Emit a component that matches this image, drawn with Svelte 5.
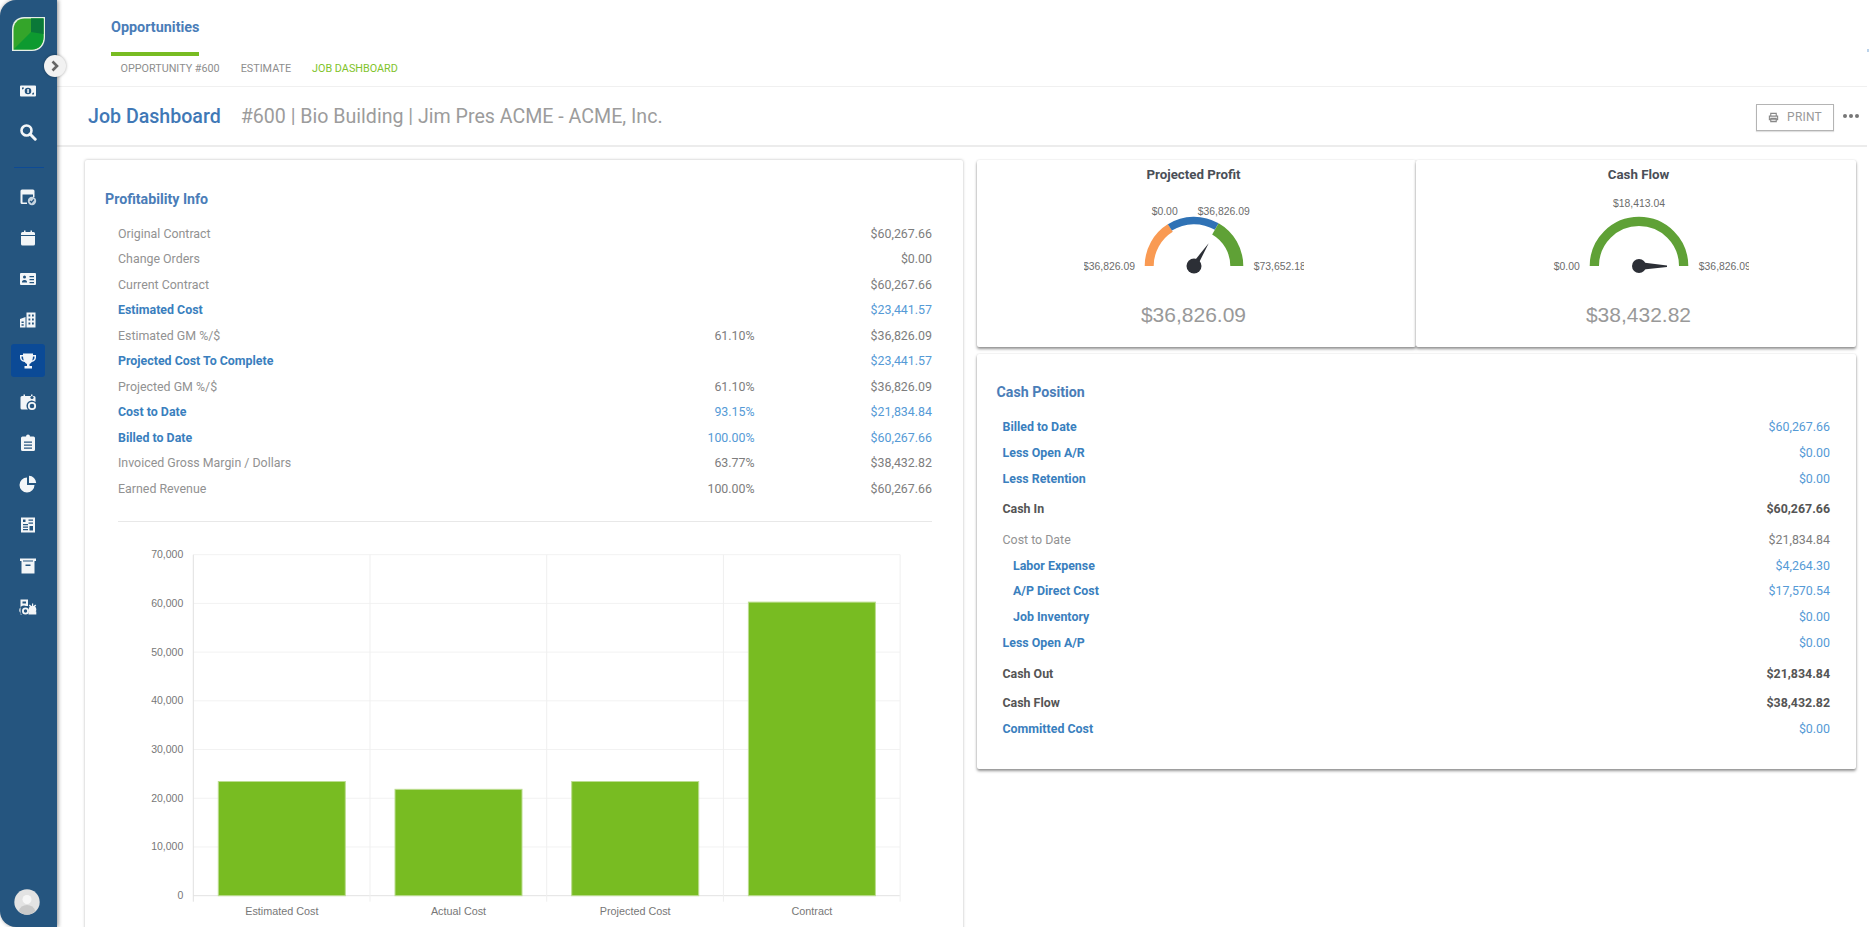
<script>
  const profit = [
    { l: 'Original Contract', a: '$60,267.66' },
    { l: 'Change Orders', a: '$0.00' },
    { l: 'Current Contract', a: '$60,267.66' },
    { l: 'Estimated Cost', a: '$23,441.57', link: true },
    { l: 'Estimated GM %/$', p: '61.10%', a: '$36,826.09' },
    { l: 'Projected Cost To Complete', a: '$23,441.57', link: true },
    { l: 'Projected GM %/$', p: '61.10%', a: '$36,826.09' },
    { l: 'Cost to Date', p: '93.15%', a: '$21,834.84', link: true },
    { l: 'Billed to Date', p: '100.00%', a: '$60,267.66', link: true },
    { l: 'Invoiced Gross Margin / Dollars', p: '63.77%', a: '$38,432.82' },
    { l: 'Earned Revenue', p: '100.00%', a: '$60,267.66' }
  ];
  const cash = [
    { l: 'Billed to Date', a: '$60,267.66', k: 'link' },
    { l: 'Less Open A/R', a: '$0.00', k: 'link' },
    { l: 'Less Retention', a: '$0.00', k: 'link' },
    { l: 'Cash In', a: '$60,267.66', k: 'strong gap' },
    { l: 'Cost to Date', a: '$21,834.84', k: 'plain gap' },
    { l: 'Labor Expense', a: '$4,264.30', k: 'link sub' },
    { l: 'A/P Direct Cost', a: '$17,570.54', k: 'link sub' },
    { l: 'Job Inventory', a: '$0.00', k: 'link sub' },
    { l: 'Less Open A/P', a: '$0.00', k: 'link' },
    { l: 'Cash Out', a: '$21,834.84', k: 'strong gap' },
    { l: 'Cash Flow', a: '$38,432.82', k: 'strong gap2' },
    { l: 'Committed Cost', a: '$0.00', k: 'link' }
  ];
  const plotL = 75.3, plotT = 32.7, plotB = 373.7, catW = 176.7;
  const ticks = [0, 10000, 20000, 30000, 40000, 50000, 60000, 70000];
  const yOf = (v) => plotB - (v / 70000) * (plotB - plotT);
  const bars = [
    { n: 'Estimated Cost', v: 23441.57 },
    { n: 'Actual Cost', v: 21834.84 },
    { n: 'Projected Cost', v: 23441.57 },
    { n: 'Contract', v: 60267.66 }
  ];
  const navIcons = ['calcheck', 'calendar', 'card', 'building', 'trophy', 'calgear', 'clip', 'pie', 'news', 'archive', 'tools'];
</script>

{#snippet icon(name)}
  <svg class="ico" viewBox="0 0 18 18" width="18" height="18" fill="#fff">
    {#if name === 'money'}
      <path fill-rule="evenodd" d="M2 3.5h14a1 1 0 0 1 1 1v9a1 1 0 0 1-1 1H2a1 1 0 0 1-1-1v-9a1 1 0 0 1 1-1zm7 2.2a3.3 3.3 0 1 0 0 6.6 3.3 3.3 0 0 0 0-6.6zM3 5.5v2a2 2 0 0 0 2-2zm12 7v-2a2 2 0 0 0-2 2z"/>
      <rect x="8.3" y="7" width="1.5" height="4"/>
    {:else if name === 'search'}
      <circle cx="7.5" cy="7.5" r="5" fill="none" stroke="#fff" stroke-width="2.6"/>
      <path d="M11 11l5.2 5.2" stroke="#fff" stroke-width="3" stroke-linecap="round"/>
    {:else if name === 'calcheck'}
      <path fill-rule="evenodd" d="M3 1.500h11a1.500 1.500 0 0 1 1.500 1.500v6h-1.500V6.500H3.500V14.500H8V16H3A1.500 1.500 0 0 1 1.500 14.500V3A1.500 1.500 0 0 1 3 1.500z"/>
      <circle cx="13" cy="13" r="4.200" fill="#cfdbe6"/>
      <path d="M11 13l1.500 1.500 2.500-3" fill="none" stroke="#25557f" stroke-width="1.200"/>
    {:else if name === 'calendar'}
      <path d="M2 7h14v8a1.500 1.500 0 0 1-1.500 1.500h-11A1.500 1.500 0 0 1 2 15zM3.500 3H5V1.500h1.500V3h5V1.500H13V3h1.500A1.500 1.500 0 0 1 16 4.500V6H2V4.500A1.500 1.500 0 0 1 3.500 3z"/>
    {:else if name === 'card'}
      <path fill-rule="evenodd" d="M2 3h14a1 1 0 0 1 1 1v10a1 1 0 0 1-1 1H2a1 1 0 0 1-1-1V4a1 1 0 0 1 1-1zm3.500 2.500a1.500 1.500 0 1 0 0 3 1.500 1.500 0 0 0 0-3zM3 11.500V12.500h5v-1a2 2 0 0 0-2-1.500H5a2 2 0 0 0-2 1.500zM10.500 6v1.200H15V6zM10.500 9v1.200H15V9zM10.500 12v1.200H15V12z"/>
    {:else if name === 'building'}
      <path fill-rule="evenodd" d="M7.500 1.500h9V16.500h-9zM9.500 3.500v2h1.800v-2zM13 3.500v2h1.800v-2zM9.500 7.500v2h1.800v-2zM13 7.500v2h1.800v-2zM9.500 11.500v2h1.800v-2zM13 11.500v2h1.800v-2z"/>
      <path fill-rule="evenodd" d="M1 8l5.500-2V16.500H1zM2.500 10.500v1.500h2.200v-1.500zM2.500 13.300v1.500h2.200v-1.500z"/>
    {:else if name === 'trophy'}
      <path fill-rule="evenodd" d="M4 1.500h10V3h3v2.500c0 2.600-2 4.200-4.200 4.500-.6 1-1.400 1.600-2.300 1.900V14h2.500v2.500H5.500V14H8v-2.100c-.9-.3-1.700-.9-2.300-1.900C3 9.700 1 8.100 1 5.500V3h3zM2.500 4.500v1c0 1.500 1 2.600 2.300 3-.4-1-.7-2.300-.8-4zM15.500 4.500H14c-.1 1.700-.4 3-.8 4 1.300-.4 2.300-1.500 2.300-3z"/>
    {:else if name === 'calgear'}
      <path fill-rule="evenodd" d="M3 3h1.500V1.500H6V3h6V1.500h1.500V3H15a1.500 1.500 0 0 1 1.500 1.500V9A5 5 0 0 0 9 16.500H3A1.500 1.500 0 0 1 1.500 15V4.500A1.500 1.500 0 0 1 3 3z"/>
      <circle cx="13" cy="13" r="3.200" fill="none" stroke="#fff" stroke-width="1.800"/>
      <circle cx="13" cy="4.500" r="1.600" fill="#25557f"/>
    {:else if name === 'clip'}
      <path fill-rule="evenodd" d="M7 2.500a2 2 0 0 1 4 0h3.500A1.500 1.500 0 0 1 16 4v11.500a1.500 1.500 0 0 1-1.500 1.500h-11A1.500 1.500 0 0 1 2 15.500V4a1.500 1.500 0 0 1 1.500-1.500zM5 7.500v1.300h8V7.500zM5 10.500v1.300h8v-1.300zM5 13.500v1.300h8v-1.300z"/>
    {:else if name === 'pie'}
      <path d="M8 2.500a7.500 7.500 0 1 0 7.500 7.500H8z"/>
      <path d="M10 .8a7.500 7.500 0 0 1 7.200 7.200H10z"/>
    {:else if name === 'news'}
      <path fill-rule="evenodd" d="M2 1.500h14V16.500H2zM4 3.500v2.500h2.500V3.500zM9.500 3.500v1.300h4.500V3.500zM9.500 6.500v1.300h4.500V6.500zM4 8v1.200h5V8zM4 10.500v1.200h5v-1.200zM4 13v1.200h5V13zM10.500 10v4.500h3.500V10z"/>
    {:else if name === 'archive'}
      <path fill-rule="evenodd" d="M1 1.500h16V4H15.500v12.500H2.500V4H1zM6.500 7.500V9h5V7.500zM4 3.500v1h10v-1z"/>
    {:else if name === 'tools'}
      <path fill-rule="evenodd" d="M1.500 1.500H9V8H7A4.500 4.500 0 0 0 3 16.500H1.500zM3.500 3.500v2H7v-2z"/>
      <circle cx="6.500" cy="13" r="2.600" fill="none" stroke="#fff" stroke-width="1.800"/>
      <circle cx="13.500" cy="11.500" r="3.800"/>
      <path d="M9.500 13.500h7.800v3H9.500z"/>
      <path d="M13 5.500h1.200V12H13zM9.800 7.500l1-1 4.500 4.500-1 1zM17.200 7.500l-1-1-4.500 4.500 1 1z"/>
    {/if}
  </svg>
{/snippet}

<div class="page">
  <aside class="rail">
    <div class="logo">
      <svg viewBox="0 0 35 36" width="35" height="36">
        <path d="M13 1H34V21C34 29 29 35 21 35H1V14C1 6 6 1 13 1z" fill="#e6efe6"/>
        <path d="M13.500 2.500H32.500V21C32.500 28 28 33.500 21 33.500H2.500V14C2.500 7 7 2.500 13.500 2.500z" fill="#34a52a"/>
        <path d="M32.500 2.500V21C32.500 28 28 33.500 21 33.500H2.500L20 16V2.500z" fill="#0d9a30"/>
        <path d="M20 2.500H32.500V18L20 16z" fill="#0a7838"/>
      </svg>
    </div>
    <button class="collapse" aria-label="Collapse">
      <svg viewBox="0 0 12 12" width="12" height="12"><path d="M3.500 1.500L8 6l-4.500 4.500" fill="none" stroke="#666" stroke-width="2.600"/></svg>
    </button>
    <div class="rail-top">
      <div class="rail-item">{@render icon('money')}</div>
      <div class="rail-item">{@render icon('search')}</div>
    </div>
    <div class="rail-sep"></div>
    <nav class="rail-nav">
      {#each navIcons as n}
        <div class="rail-item" class:active={n === 'trophy'}>{@render icon(n)}</div>
      {/each}
    </nav>
    <div class="avatar">
      <svg viewBox="0 0 26 26" width="26" height="26">
        <circle cx="13" cy="13" r="12.700" fill="#e3e3e3"/>
        <circle cx="13" cy="10.500" r="4.500" fill="#f7f7f7"/>
        <path d="M4.500 22c1.500-4 4.500-6 8.500-6s7 2 8.500 6A12.700 12.700 0 0 1 13 25.700 12.700 12.700 0 0 1 4.500 22z" fill="#c9c9c9"/>
      </svg>
    </div>
  </aside>

  <main class="main">
    <header class="tabs">
      <div class="tab">Opportunities</div>
      <div class="subnav">
        <span>OPPORTUNITY #600</span>
        <span>ESTIMATE</span>
        <span class="current">JOB DASHBOARD</span>
      </div>
      <i class="edge-mark"></i>
    </header>

    <div class="titlebar">
      <h1>Job Dashboard</h1>
      <h2>#600 | Bio Building | Jim Pres ACME - ACME, Inc.</h2>
      <button class="print">
        <svg viewBox="0 0 12 12" width="11" height="11" fill="none" stroke="#888" stroke-width="1.200"><path d="M3 4V1.500h6V4M1.500 4.500h9v4h-9zM3 7h6v3.500H3z"/></svg>
        PRINT
      </button>
      <div class="dots"><b></b><b></b><b></b></div>
    </div>

    <div class="content">
      <section class="card left">
        <h3>Profitability Info</h3>
        <div class="ptable">
          {#each profit as r}
            <div class="prow" class:link={r.link}>
              <span class="lbl">{r.l}</span>
              <span class="num">{r.p ?? ''}</span>
              <span class="num">{r.a}</span>
            </div>
          {/each}
        </div>
        <hr />
        <svg class="chart" width="814" height="404" viewBox="0 0 814 404">
          {#each ticks as t}
            <line x1={plotL} x2={plotL + catW * 4} y1={yOf(t)} y2={yOf(t)} stroke={t === 0 ? '#e2e2e2' : '#f2f2f2'} />
            <text x="65.300" y={yOf(t) + 3.500} text-anchor="end" class="axis">{t.toLocaleString('en-US')}</text>
          {/each}
          {#each [0, 1, 2, 3, 4] as i}
            <line x1={plotL + catW * i} x2={plotL + catW * i} y1={plotT} y2={plotB + 6} stroke={i === 0 ? '#e0e0e0' : '#efefef'} />
          {/each}
          {#each bars as b, i}
            <rect x={plotL + 25 + catW * i} y={yOf(b.v)} width="127" height={plotB - yOf(b.v)} fill="#78bc22" stroke="#bcdd90" />
            <text x={plotL + 88.500 + catW * i} y="392.500" text-anchor="middle" class="axis xl">{b.n}</text>
          {/each}
        </svg>
      </section>

      <div class="right">
        <div class="gauges">
          <section class="card gauge g1">
            <h4>Projected Profit</h4>
            <svg viewBox="0 0 220 100" width="220" height="100">
              <g fill="none">
                <path d="M65.200 75A44.800 44.800 0 0 1 86.400 36.900" stroke="#f99a53" stroke-width="9" />
                <path d="M85.900 36.400A45.500 45.500 0 0 1 132.750 35.600" stroke="#2f72b5" stroke-width="7.500" />
                <path d="M131.400 37.900A42.800 42.800 0 0 1 152.800 75" stroke="#5fa136" stroke-width="13" />
              </g>
              <path d="M107.500 73.400L124.700 52.300 112.500 76.600z" fill="#2c2f36" />
              <circle cx="110" cy="75" r="7.500" fill="#2c2f36" />
              <text x="51" y="78.500" text-anchor="end" class="gl">$36,826.09</text>
              <text x="93.700" y="24" text-anchor="end" class="gl">$0.00</text>
              <text x="113.700" y="24" class="gl">$36,826.09</text>
              <text x="169.700" y="78.500" class="gl">$73,652.18</text>
            </svg>
            <div class="big">$36,826.09</div>
          </section>
          <section class="card gauge g2">
            <h4>Cash Flow</h4>
            <svg viewBox="0 0 220 100" width="220" height="100">
              <path d="M65.350 75A44.650 44.650 0 0 1 154.650 75" fill="none" stroke="#5fa136" stroke-width="9.300" />
              <path d="M110 71L138 74.500 138 76 110 79z" fill="#2c2f36" />
              <circle cx="110" cy="75" r="7" fill="#2c2f36" />
              <text x="110" y="15.500" text-anchor="middle" class="gl">$18,413.04</text>
              <text x="50.800" y="78.500" text-anchor="end" class="gl">$0.00</text>
              <text x="169.800" y="78.500" class="gl">$36,826.09</text>
            </svg>
            <div class="big">$38,432.82</div>
          </section>
        </div>

        <section class="card cashcard">
          <h3>Cash Position</h3>
          <div class="ctable">
            {#each cash as r}
              <div class="crow {r.k}">
                <span class="lbl">{r.l}</span>
                <span class="num">{r.a}</span>
              </div>
            {/each}
          </div>
        </section>
      </div>
    </div>
  </main>
</div>

<style>
  :global(body) {
    margin: 0;
    background: #fff;
    font-family: Roboto, "Liberation Sans", sans-serif;
  }
  .page {
    width: 1869px;
    height: 927px;
    display: flex;
    overflow: hidden;
    background: #fff;
  }
  .rail {
    position: relative;
    flex: 0 0 57px;
    width: 57px;
    height: 927px;
    box-sizing: border-box;
    background: #25557f;
    border-radius: 16px 0 0 16px;
    box-shadow: 1px 0 4px rgba(0, 0, 0, 0.45);
    display: flex;
    flex-direction: column;
    align-items: center;
    padding-top: 16px;
    z-index: 2;
  }
  .logo {
    width: 35px;
    height: 36px;
    margin-left: -1px;
  }
  .logo svg, .avatar svg { display: block; }
  .collapse {
    position: absolute;
    left: 44px;
    top: 55px;
    width: 22px;
    height: 22px;
    padding: 0;
    border: 0;
    border-radius: 50%;
    background: #f2f2f2;
    box-shadow: 0 0 3px rgba(0, 0, 0, 0.35);
    display: flex;
    align-items: center;
    justify-content: center;
  }
  .rail-top {
    margin-top: 18px;
    display: flex;
    flex-direction: column;
  }
  .rail-sep {
    width: 30px;
    height: 1px;
    margin: 15px 0 8px;
    background: #0d4a95;
  }
  .rail-nav {
    display: flex;
    flex-direction: column;
  }
  .rail-item {
    width: 34px;
    height: 41px;
    display: flex;
    align-items: center;
    justify-content: center;
    margin-left: -1px;
  }
  .rail-item.active {
    height: 33px;
    margin-top: 4px;
    margin-bottom: 4px;
    background: #0b4a96;
    border-radius: 3px;
  }
  .ico { display: block; opacity: 0.95; }
  .avatar {
    margin-top: auto;
    margin-bottom: 12px;
    margin-left: -3px;
  }
  .main {
    flex: 1;
    min-width: 0;
    padding-right: 2px;
  }
  .tabs {
    position: relative;
    height: 87px;
    box-sizing: border-box;
    padding: 19px 0 0 54px;
    border-bottom: 1px solid #f0f0f0;
  }
  .tab {
    width: 88px;
    height: 33px;
    font-size: 14.400px;
    font-weight: 700;
    line-height: 18px;
    color: #4a7db8;
    border-bottom: 4px solid #78bc22;
    white-space: nowrap;
  }
  .subnav {
    display: flex;
    gap: 21px;
    margin: 6px 0 0 9.500px;
    font-size: 10.800px;
    line-height: 14px;
    color: #8e8e8e;
  }
  .subnav .current { color: #7fc32a; }
  .edge-mark {
    position: absolute;
    right: -2px;
    top: 49px;
    width: 2px;
    height: 3px;
    background: #bcd3ea;
  }
  .titlebar {
    height: 60px;
    box-sizing: border-box;
    display: flex;
    align-items: center;
    padding: 0 8px 0 31px;
    border-bottom: 2px solid #ececec;
  }
  h1 {
    margin: 0;
    font-size: 19.600px;
    font-weight: 500;
    color: #4078b6;
    white-space: nowrap;
  }
  h2 {
    margin: 0 0 0 20px;
    font-size: 19.600px;
    font-weight: 400;
    color: #9c9c9c;
    white-space: nowrap;
  }
  .print {
    margin-left: auto;
    margin-top: 2px;
    width: 78px;
    height: 27px;
    box-sizing: border-box;
    border: 1px solid #b4b4b4;
    background: #fff;
    box-shadow: 0 1px 1px rgba(0, 0, 0, 0.12);
    color: #999;
    font: 400 12px Roboto, sans-serif;
    letter-spacing: 0.2px;
    display: flex;
    align-items: center;
    justify-content: center;
    gap: 8px;
  }
  .dots {
    display: flex;
    gap: 2px;
    margin-left: 9px;
  }
  .dots b {
    width: 4px;
    height: 4px;
    border-radius: 50%;
    background: #777;
  }
  .content {
    display: grid;
    grid-template-columns: 878px 879px;
    gap: 14px;
    padding: 13px 0 0 28px;
    align-items: start;
  }
  .card {
    background: #fff;
    box-sizing: border-box;
    border-radius: 2px;
  }
  .left {
    height: 900px;
    padding: 30px 31px 0 33px;
    box-shadow: 0 0 3px rgba(0, 0, 0, 0.28);
  }
  h3 {
    margin: 0;
    font-size: 14.200px;
    font-weight: 700;
    line-height: 18px;
    color: #4a7db8;
    white-space: nowrap;
  }
  .left h3 { margin-left: -13px; margin-bottom: 12.500px; }
  .prow {
    display: grid;
    grid-template-columns: 1fr 80px 177.400px;
    height: 25.500px;
    align-items: center;
    font-size: 12.400px;
    color: #929292;
  }
  .lbl { white-space: nowrap; }
  .num { text-align: right; white-space: nowrap; }
  .prow .num { color: #7d7d7d; }
  .prow.link .lbl { color: #3a7fbe; font-weight: 700; }
  .prow.link .num { color: #559ad6; }
  hr {
    border: 0;
    border-top: 1px solid #e8e8e8;
    margin: 20px 0 0;
  }
  .chart { display: block; }
  .axis {
    font: 10.500px "Liberation Sans", Arial, sans-serif;
    fill: #777;
  }
  .axis.xl { font-size: 10.800px; }
  .gl {
    font: 10.400px "Liberation Sans", Arial, sans-serif;
    fill: #6c6c6c;
  }
  .right {
    display: flex;
    flex-direction: column;
    gap: 7px;
  }
  .gauges {
    display: grid;
    grid-template-columns: 439px 440px;
    gap: 0;
  }
  .gauge {
    height: 187px;
    padding-top: 7px;
    display: flex;
    flex-direction: column;
    align-items: center;
    box-shadow: 0 2px 3px rgba(0, 0, 0, 0.42), 0 0 2px rgba(0, 0, 0, 0.12);
  }
  .g1 { padding-right: 6px; }
  .g2 { padding-left: 5px; }
  h4 {
    margin: 0 0 8px;
    font-size: 13.300px;
    line-height: 16px;
    font-weight: 700;
    color: #4a4f57;
  }
  .gauge svg { display: block; }
  .big {
    margin-top: 10px;
    font: 400 21px/28px "Liberation Sans", Arial, sans-serif;
    color: #999;
  }
  .cashcard {
    height: 415px;
    padding: 29px 26px 0 19.500px;
    box-shadow: 0 2px 3px rgba(0, 0, 0, 0.42), 0 0 2px rgba(0, 0, 0, 0.12);
  }
  .cashcard h3 { margin-bottom: 13px; }
  .ctable { padding-left: 6px; }
  .crow {
    display: flex;
    justify-content: space-between;
    align-items: center;
    height: 25.700px;
    font-size: 12.400px;
  }
  .crow.gap { margin-top: 5px; }
  .crow.gap2 { margin-top: 4px; }
  .crow.link .lbl { color: #3a7fbe; font-weight: 700; }
  .crow.link .num { color: #559ad6; }
  .crow.sub .lbl { padding-left: 10.500px; }
  .crow.strong .lbl, .crow.strong .num { color: #555; font-weight: 700; }
  .crow.plain .lbl { color: #929292; }
  .crow.plain .num { color: #7d7d7d; }
</style>
